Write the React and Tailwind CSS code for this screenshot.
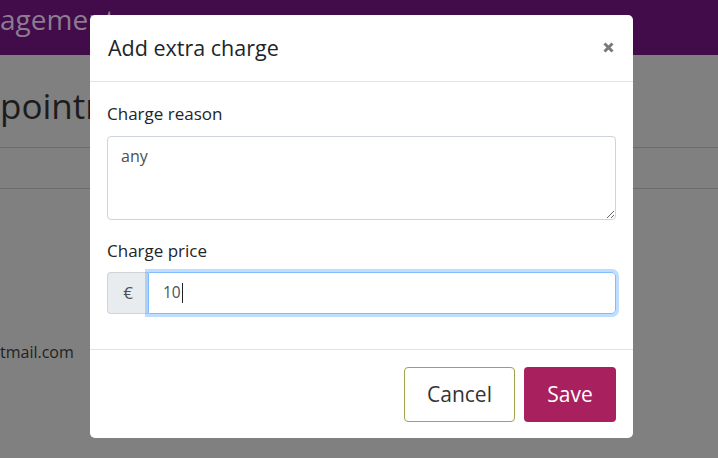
export default function App() {
  return (
    <div className="relative h-[458px] w-[718px] overflow-hidden bg-[#808080] font-['Open_Sans',sans-serif]">
      {/* page behind the backdrop */}
      <div className="flex h-[55px] items-start bg-[#420b4a]">
        <span className="text-[28px] leading-[38px] text-[#8c7c90]">agement</span>
      </div>
      <div className="pt-[26px]">
        <h1 className="text-[35px] leading-[50px] text-[#1c1c1c]">pointm</h1>
        <div className="mt-[16px] h-[42px] border-y border-[#6c6c6c]" />
        <p className="mt-[151px] text-[16px] leading-[24px] text-[#1f1f1f]">tmail.com</p>
      </div>

      {/* modal */}
      <div className="absolute inset-0 flex items-start">
        <div className="ml-[90px] mt-[15px] flex w-[543px] flex-col rounded-[5px] bg-white text-[#212529]">
          <div className="flex h-[67px] items-center justify-between border-b border-[#e2e2e2] pl-[18px] pr-[19px]">
            <h2 className="text-[21.5px] leading-[28px]">Add extra charge</h2>
            <svg width="11" height="11" viewBox="0 0 11 11" className="mb-[2px]">
              <path d="M1.5 1.5 L9.5 9.5 M9.5 1.5 L1.5 9.5" stroke="#7a7a7a" strokeWidth="3" strokeLinecap="butt" />
            </svg>
          </div>

          <div className="flex flex-col px-[17px] pb-[35px] pt-[20px]">
            <label className="text-[17px] leading-[24px]">Charge reason</label>
            <textarea
              readOnly
              defaultValue="any"
              className="mt-[10px] h-[84px] w-full rounded-[4px] border border-[#ced4da] px-[13px] py-[7px] text-[16px] leading-[24px] text-[#495057] outline-none"
            />
            <label className="mt-[19px] text-[17px] leading-[24px]">Charge price</label>
            <div className="mt-[9px] flex h-[42px]">
              <div className="flex w-[41px] items-center justify-center rounded-l-[4px] border border-r-0 border-[#ced4da] bg-[#e9ecef] text-[17px] text-[#495057]">
                €
              </div>
              <div className="flex flex-1 items-center rounded-r-[4px] border border-[#80bdff] pl-[14px] text-[15.5px] text-[#495057] ring-[3px] ring-[#007bff]/25">
                <span>10</span>
                <span className="ml-[1px] h-[20px] w-[1px] bg-[#222]" />
              </div>
            </div>
          </div>

          <div className="flex justify-end gap-[9px] border-t border-[#e2e2e2] pb-[16px] pr-[17px] pt-[17px]">
            <button className="h-[55px] w-[111px] rounded-[4px] border border-[#a3a34a] bg-white text-[21px] text-[#333]">
              Cancel
            </button>
            <button className="h-[55px] w-[92px] rounded-[4px] bg-[#a8215e] text-[21px] text-white">
              Save
            </button>
          </div>
        </div>
      </div>
    </div>
  );
}
